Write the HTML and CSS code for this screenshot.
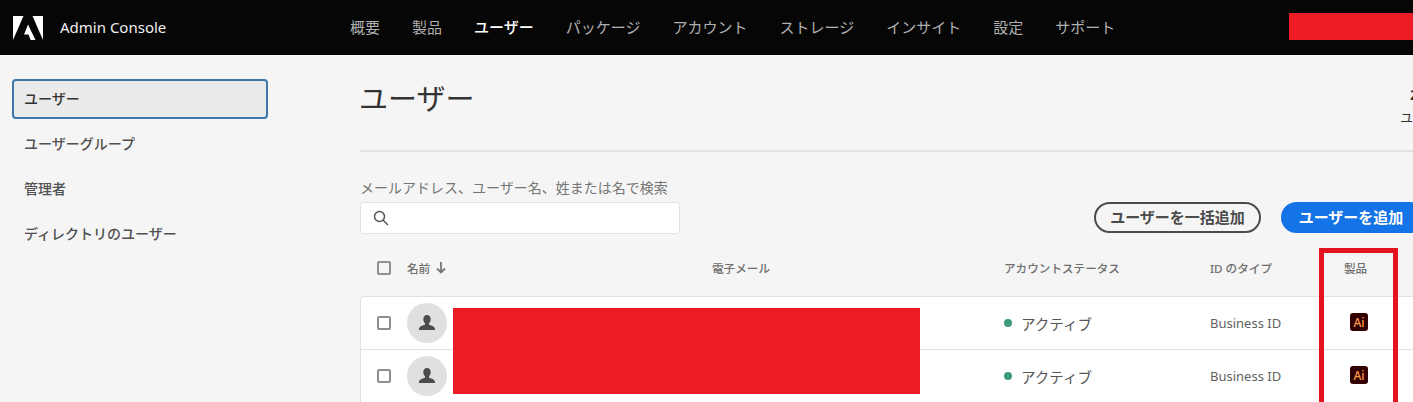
FILE: index.html
```html
<!DOCTYPE html>
<html lang="ja">
<head>
    <meta charset="UTF-8">
    <meta name="viewport" content="width=device-width, initial-scale=1.0">
    <title>Admin Console</title>
    <link rel="stylesheet" href="styles.css">
</head>
<body>
<header class="topbar">
    <div class="brand">
        <svg class="logo" width="30" height="26" viewBox="0 0 30 26"><path d="M0 25V1h10.500zM30 25V1H19.500zM15 9.500 22.500 25h-4.800l-2.200-5.500H11z" fill="#fff"/></svg>
        <span class="brand-name">Admin Console</span>
    </div>
    <nav class="nav">
        <a href="#">概要</a>
        <a href="#">製品</a>
        <a href="#" class="current">ユーザー</a>
        <a href="#">パッケージ</a>
        <a href="#">アカウント</a>
        <a href="#">ストレージ</a>
        <a href="#">インサイト</a>
        <a href="#">設定</a>
        <a href="#">サポート</a>
    </nav>
    <div class="redact-top"></div>
</header>

<div class="page">
    <aside class="side">
        <a href="#" class="side-item active">ユーザー</a>
        <a href="#" class="side-item">ユーザーグループ</a>
        <a href="#" class="side-item">管理者</a>
        <a href="#" class="side-item">ディレクトリのユーザー</a>
    </aside>

    <main class="main">
        <div class="title-row">
            <h1>ユーザー</h1>
            <div class="stat">
                <div class="stat-num">2</div>
                <div class="stat-label">ユーザー</div>
            </div>
        </div>

        <div class="tools">
            <div class="search-box">
                <label for="search">メールアドレス、ユーザー名、姓または名で検索</label>
                <div class="search-input">
                    <svg width="16" height="16" viewBox="0 0 16 16" fill="none" stroke="#555" stroke-width="1.500"><circle cx="6.500" cy="6.500" r="5"/><path d="M10.200 10.200 15 15"/></svg>
                    <input type="text" id="search">
                </div>
            </div>
            <div class="buttons">
                <button class="btn btn-outline">ユーザーを一括追加</button>
                <button class="btn btn-blue">ユーザーを追加</button>
            </div>
        </div>

        <div class="table-wrap">
            <div class="row head">
                <span class="check"></span>
                <span class="name-head">名前
                    <svg width="10" height="12" viewBox="0 0 10 12" fill="none" stroke="#777" stroke-width="1.800"><path d="M5 0v10.500M1 6.500l4 4 4-4"/></svg>
                </span>
                <span>電子メール</span>
                <span>アカウントステータス</span>
                <span>ID のタイプ</span>
                <span>製品</span>
            </div>
            <div class="rows">
                <div class="row">
                    <span class="check"></span>
                    <span class="avatar"><svg width="18" height="18" viewBox="0 0 18 18"><path d="M9 1c2.300 0 3.700 1.800 3.700 4.200 0 1.700-.7 3.200-1.700 4v1.500c2.500 1 6 1.700 6 4.300v1H1v-1c0-2.600 3.500-3.300 6-4.300V9.200c-1-.8-1.700-2.300-1.700-4C5.300 2.800 6.700 1 9 1z" fill="#4b4b4b"/></svg></span>
                    <span></span>
                    <span class="status"><i class="dot"></i>アクティブ</span>
                    <span class="idtype">Business ID</span>
                    <span class="app">Ai</span>
                </div>
                <div class="row">
                    <span class="check"></span>
                    <span class="avatar"><svg width="18" height="18" viewBox="0 0 18 18"><path d="M9 1c2.300 0 3.700 1.800 3.700 4.200 0 1.700-.7 3.200-1.700 4v1.500c2.500 1 6 1.700 6 4.300v1H1v-1c0-2.600 3.500-3.300 6-4.300V9.200c-1-.8-1.700-2.300-1.700-4C5.300 2.800 6.700 1 9 1z" fill="#4b4b4b"/></svg></span>
                    <span></span>
                    <span class="status"><i class="dot"></i>アクティブ</span>
                    <span class="idtype">Business ID</span>
                    <span class="app">Ai</span>
                </div>
            </div>
            <div class="redact-names"></div>
            <div class="callout"></div>
        </div>
    </main>
</div>
</body>
</html>
```

FILE: styles.css
```css
html, body {
    margin: 0;
    height: 402px;
    overflow: hidden;
}

body {
    font-family: "Noto Sans", "Noto Sans CJK JP", sans-serif;
    background-color: #f5f5f5;
    color: #4b4b4b;
}

a {
    color: inherit;
    text-decoration: none;
}

/* barra superior */
.topbar {
    position: relative;
    display: flex;
    align-items: center;
    height: 55px;
    background-color: #060606;
    color: #b0b0b0;
}

.brand {
    display: flex;
    align-items: center;
    width: 350px;
    padding-left: 13px;
    box-sizing: border-box;
}

.logo {
    margin-right: 17px;
}

.brand-name {
    color: #f0f0f0;
    font-size: 15px;
    padding-bottom: 2px;
}

.nav {
    display: flex;
    gap: 32px;
    font-size: 15px;
    padding-bottom: 2px;
}

.nav .current {
    color: #fff;
    font-weight: 500;
}

.redact-top {
    position: absolute;
    top: 13px;
    left: 1289px;
    right: 0;
    height: 27px;
    background-color: #ed1c24;
}

.page {
    display: flex;
}

/* menu lateral */
.side {
    width: 360px;
    flex: none;
    padding: 24px 0 0 12px;
    box-sizing: border-box;
    display: flex;
    flex-direction: column;
}

.side-item {
    width: 256px;
    height: 45px;
    line-height: 45px;
    padding-left: 12px;
    box-sizing: border-box;
    font-size: 14px;
    font-weight: 500;
    color: #505050;
}

.side-item.active {
    height: 40px;
    line-height: 36px;
    margin-bottom: 2px;
    background-color: #eaeaea;
    border: 2px solid #3f76a8;
    border-radius: 4px;
    padding-left: 10px;
    color: #333;
}

/* conteudo */
.main {
    flex: 1;
    min-width: 0;
}

.title-row {
    display: flex;
    justify-content: space-between;
    height: 97px;
    border-bottom: 2px solid #e1e1e1;
    box-sizing: border-box;
    overflow: hidden;
}

h1 {
    margin: 20px 0 0 -1px;
    font-size: 29px;
    font-weight: 400;
    line-height: 48px;
    color: #333;
}

.stat {
    width: 13px;
    white-space: nowrap;
    padding-top: 29px;
    font-size: 13px;
    line-height: 22px;
    color: #333;
    overflow: hidden;
}

.stat-num {
    font-weight: 700;
    margin-left: 10px;
    font-size: 14px;
}

.tools {
    display: flex;
    justify-content: space-between;
    height: 92px;
    margin-top: 24px;
}

.search-box label {
    display: block;
    margin-bottom: 2px;
    font-size: 14px;
    line-height: 24px;
    color: #757575;
}

.search-input {
    display: flex;
    align-items: center;
    width: 320px;
    height: 32px;
    padding-left: 12px;
    box-sizing: border-box;
    background-color: #fff;
    border: 1px solid #e3e3e3;
    border-radius: 3px;
}

.search-input input {
    border: none;
    outline: none;
    flex: 1;
    min-width: 0;
    background: none;
}

.buttons {
    display: flex;
    gap: 20px;
    height: 31px;
    margin-top: 26px;
    margin-right: -12px;
}

.btn {
    height: 31px;
    border-radius: 16px;
    font-family: inherit;
    font-size: 15px;
    font-weight: 700;
    padding: 0 0 3px;
    box-sizing: border-box;
}

.btn-outline {
    width: 167px;
    background: none;
    border: 2px solid #4b4b4b;
    color: #4b4b4b;
}

.btn-blue {
    width: 144px;
    padding-right: 4px;
    background-color: #1473e6;
    border: none;
    color: #fff;
}

/* tabela */
.table-wrap {
    position: relative;
}

.row {
    display: grid;
    grid-template-columns: 30px 305px 292px 206px 134px 1fr;
    align-items: center;
    height: 53px;
    padding-left: 17px;
    font-size: 13px;
    border-bottom: 1px solid #e1e1e1;
    box-sizing: border-box;
}

.row.head {
    position: absolute;
    top: -14px;
    left: 0;
    right: 0;
    height: 28px;
    border-bottom: none;
    font-size: 11.600px;
    font-weight: 500;
    color: #6e6e6e;
}

.rows {
    padding-top: 28px;
}

.rows .row {
    background-color: #fff;
    border-left: 1px solid #e1e1e1;
    padding-left: 16px;
}

.rows .row:first-child {
    height: 54px;
    border-top: 1px solid #e1e1e1;
    border-top-left-radius: 4px;
}

.check {
    width: 14px;
    height: 14px;
    border: 2px solid #8e8e8e;
    border-radius: 2px;
    box-sizing: border-box;
    background-color: #fff;
}

.head .check {
    background: none;
}

.name-head {
    display: flex;
    align-items: center;
    gap: 6px;
}

.avatar {
    display: flex;
    align-items: center;
    justify-content: center;
    width: 40px;
    height: 40px;
    border-radius: 50%;
    background-color: #e0e0e0;
}

.status {
    font-size: 14.500px;
    color: #555;
    display: flex;
    align-items: center;
}

.dot {
    width: 8px;
    height: 8px;
    margin-right: 9px;
    border-radius: 50%;
    background-color: #3d9a7c;
}

.idtype {
    color: #5f5f5f;
}

.app {
    display: flex;
    align-items: center;
    justify-content: center;
    width: 18px;
    height: 18px;
    margin-left: 6px;
    margin-top: -2px;
    background-color: #330000;
    border-radius: 3px;
    color: #ff9a4a;
    font-size: 12px;
    font-weight: 500;
}

/* tarjas sobre a captura */
.redact-names {
    position: absolute;
    left: 93px;
    top: 40px;
    width: 467px;
    height: 86px;
    background-color: #ed1c24;
}

.callout {
    position: absolute;
    left: 959px;
    top: -20px;
    width: 79px;
    height: 160px;
    border: 5px solid #e3141f;
    box-sizing: border-box;
}
```
